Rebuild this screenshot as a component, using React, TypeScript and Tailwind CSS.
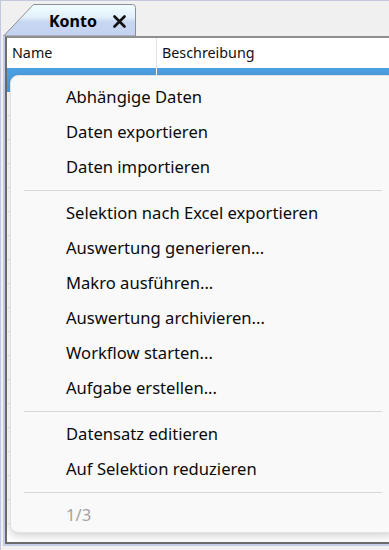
type Entry = { label: string; disabled?: boolean } | "sep";

const entries: Entry[] = [
  { label: "Abhängige Daten" },
  { label: "Daten exportieren" },
  { label: "Daten importieren" },
  "sep",
  { label: "Selektion nach Excel exportieren" },
  { label: "Auswertung generieren..." },
  { label: "Makro ausführen..." },
  { label: "Auswertung archivieren..." },
  { label: "Workflow starten..." },
  { label: "Aufgabe erstellen..." },
  "sep",
  { label: "Datensatz editieren" },
  { label: "Auf Selektion reduzieren" },
  "sep",
  { label: "1/3", disabled: true },
];

const Tab = () => (
  <div className="relative w-[134px] h-[32px] flex items-center pl-[46px] pt-[2px]">
    <svg className="absolute inset-0" width="134" height="32" viewBox="0 0 134 32">
      <defs>
        <linearGradient id="tabfill" x1="0" y1="0" x2="0" y2="1">
          <stop offset="0" stopColor="#f2ffff" />
          <stop offset="0.4" stopColor="#e2f0fb" />
          <stop offset="0.55" stopColor="#c8d7f1" />
          <stop offset="1" stopColor="#c3d2ef" />
        </linearGradient>
      </defs>
      <path d="M0.5 32 L30.5 0.5 L129.5 0.5 Q132.5 0.5 132.5 3.5 L132.5 32 Z" fill="url(#tabfill)" stroke="#8e8e96" strokeWidth="1" />
    </svg>
    <span className="relative text-[16px] font-bold text-black leading-none">Konto</span>
    <svg className="relative ml-[16px]" width="13" height="13" viewBox="0 0 13 13">
      <path d="M1.5 1.5 L11.5 11.5 M11.5 1.5 L1.5 11.5" stroke="#111" strokeWidth="2.6" strokeLinecap="round" />
    </svg>
  </div>
);

const MenuItem = ({ label, disabled }: { label: string; disabled?: boolean }) => (
  <div className={`h-[35px] flex items-center pl-[55px] text-[16.6px] ${disabled ? "text-[#a3a3a3]" : "text-[#0a0a0a]"}`}>
    {label}
  </div>
);

export default function App() {
  return (
    <div className="relative w-[389px] h-[550px] overflow-hidden bg-[#f0f0f0] border-l border-t border-[#c4c8dc] font-['Segoe_UI','Noto_Sans',sans-serif]">
      <div className="h-[35px] flex items-end pl-[2px]">
        <Tab />
      </div>
      <div className="h-[510px] ml-[2px] border-l-2 border-b-2 border-[#c6cde8]">
        <div className="h-full border-l-2 border-t-2 border-b-2 border-t-[#8f8f8f] border-l-[#6c6c6c] border-b-[#6c6c6c] bg-white">
          <div className="h-[30px] flex items-center text-[14.3px] text-[#111]">
            <div className="w-[150px] h-full flex items-center pl-[5px] border-r border-[#e2e2e2]">Name</div>
            <div className="flex-1 h-full flex items-center pl-[5px]">Beschreibung</div>
          </div>
          <div className="h-[24px] flex bg-[#4c9fe1]">
            <div className="w-[150px] border-r border-white" />
          </div>
          {Array.from({ length: 18 }).map((_, i) => (
            <div key={i} className="h-[24px] flex border-b border-[#ececec]">
              <div className="w-[150px] border-r border-[#ececec]" />
            </div>
          ))}
        </div>
      </div>

      <div className="absolute left-[9px] top-[74px] w-[386px] h-[458px] rounded-[8px] bg-[#f9f9f9] border border-[#e2e2e2] shadow-[0_3px_8px_rgba(0,0,0,0.18)] pt-[4px]">
        {entries.map((e, i) =>
          e === "sep" ? (
            <div key={i} className="h-[11px] flex items-center px-[13px]">
              <div className="h-px w-full bg-[#d8d8d8]" />
            </div>
          ) : (
            <MenuItem key={i} label={e.label} disabled={e.disabled} />
          )
        )}
      </div>
    </div>
  );
}
